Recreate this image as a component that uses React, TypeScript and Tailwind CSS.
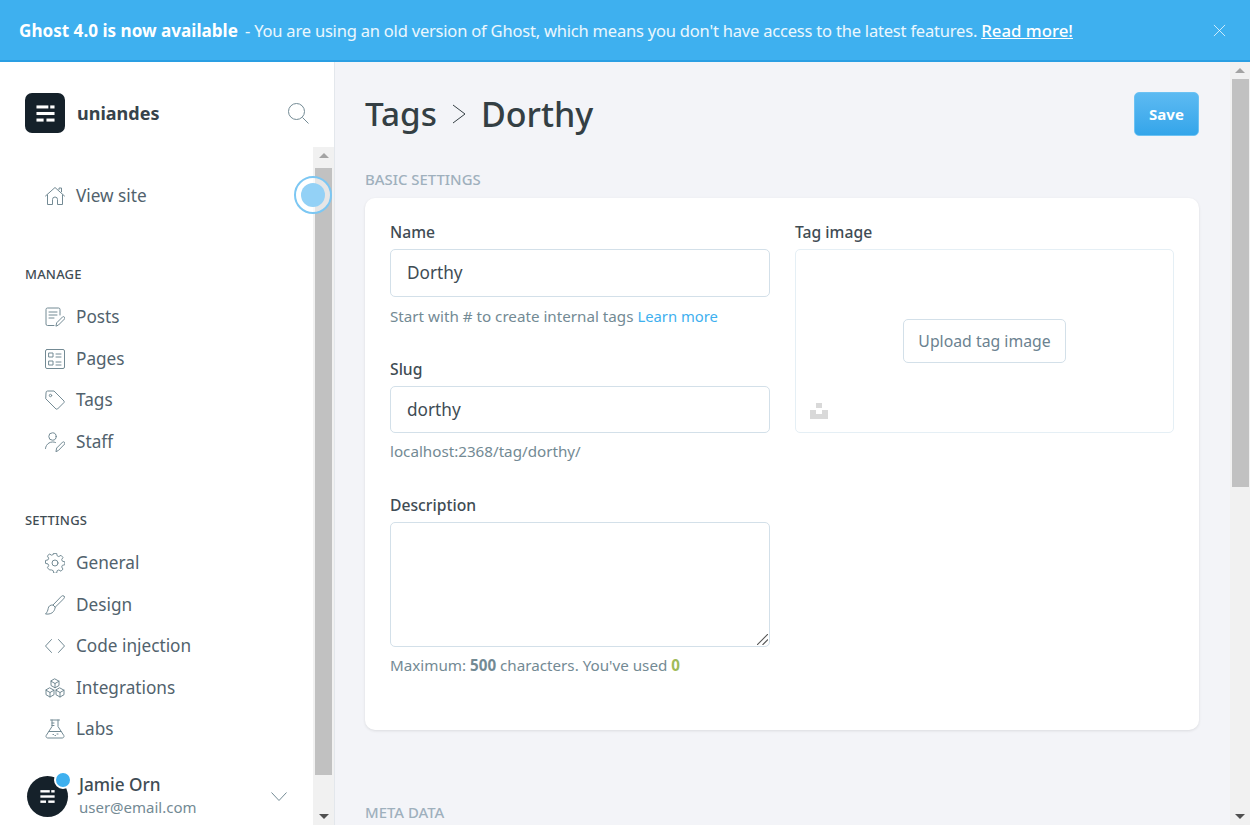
import type { ReactNode } from "react";

const Mark = ({ className }: { className: string }) => (
  <svg viewBox="0 0 20 20" className={className} fill="currentColor">
    <rect x="0.500" y="1.500" width="12.500" height="3.200" />
    <rect x="15" y="1.500" width="4.500" height="3.200" />
    <rect x="0.500" y="8.400" width="19" height="3.200" />
    <rect x="0.500" y="15.300" width="7.500" height="3.200" />
    <rect x="11" y="15.300" width="8.500" height="3.200" />
  </svg>
);

const Icon = ({ children }: { children: ReactNode }) => (
  <svg
    viewBox="0 0 20 20"
    className="w-5 h-5 shrink-0 text-[#738a94]"
    fill="none"
    stroke="currentColor"
    strokeWidth="1"
    strokeLinecap="round"
    strokeLinejoin="round"
  >
    {children}
  </svg>
);

const icons: Record<string, ReactNode> = {
  home: (
    <>
      <path d="M0.500 10 10 1.500l9.500 8.500" />
      <path d="M2.500 9v9.500h5v-5a2.500 2.500 0 0 1 5 0v5h5V9" />
      <path d="M14 3.500V2h2.500v3.700" />
    </>
  ),
  posts: (
    <>
      <path d="M9 18.500H2.500a1.500 1.500 0 0 1-1.500-1.500V2.500A1.500 1.500 0 0 1 2.500 1h11A1.500 1.500 0 0 1 15 2.500V8" />
      <path d="M4 5h8M4 8h8M4 11h5" />
      <path d="m11 18.800.7-3 6-6a1.500 1.500 0 0 1 2 2l-6 6z" />
    </>
  ),
  pages: (
    <>
      <rect x="0.500" y="0.500" width="19" height="19" rx="1.500" />
      <rect x="4" y="4" width="4" height="4" />
      <rect x="4" y="12" width="4" height="4" />
      <path d="M11 5h5M11 8h5M11 13h5M11 16h5" />
    </>
  ),
  tags: (
    <>
      <path d="M1 2.500A1.500 1.500 0 0 1 2.500 1H9l10 10a1.500 1.500 0 0 1 0 1.500L12.500 19a1.500 1.500 0 0 1-1.500 0L1 9z" />
      <circle cx="5.500" cy="5.500" r="1.200" />
    </>
  ),
  staff: (
    <>
      <circle cx="7.500" cy="4.500" r="3.700" />
      <path d="M0.500 16.500a7 7 0 0 1 10-6" />
      <path d="m11 19.300.7-3.300 6-6a1.500 1.500 0 0 1 2 2l-6 6.200z" />
    </>
  ),
  general: (
    <>
      <circle cx="10" cy="10" r="3" />
      <path d="M8.500 1h3l.5 2.500 1.700.8 2.300-1.300 2 2.200-1.300 2.200.7 1.700 2.600.6v3l-2.600.6-.7 1.700 1.300 2.200-2 2.200-2.300-1.300-1.700.8-.5 2.500h-3l-.5-2.500-1.700-.8L4 18l-2-2.200 1.300-2.200-.7-1.700L0 11.300v-3l2.600-.6.700-1.700L2 3.800 4 1.600l2.300 1.300L8 2.100z" transform="translate(.5 -.6) scale(.97)" />
    </>
  ),
  design: (
    <>
      <path d="M19 1.200c-.8-.8-1.800-.6-2.500 0L8 10l2.200 2.200 8.600-8.500c.7-.7 1-1.700.2-2.500z" />
      <path d="M8 10c-3-.5-4.500 1.500-4.800 3.500-.3 2-1.200 4-2.700 5.500 3.500.5 6.500-.5 8-2.500 1.200-1.500 1.500-3 1.700-4.300" />
    </>
  ),
  code: <path d="M6.500 3.500 0.500 10l6 6.500M13.500 3.500l6 6.500-6 6.500" />,
  integrations: (
    <>
      <path d="m10 1 4 2.200v4.300l-4 2.300-4-2.300V3.200zM6 3.200l4 2.300 4-2.300M10 5.500v4.300" />
      <path d="m5 10 4 2.200v4.500L5 19l-4-2.300v-4.500zM1 12.200l4 2.300 4-2.300M5 14.500V19" />
      <path d="m15 10 4 2.200v4.500L15 19l-4-2.300v-4.500zM11 12.200l4 2.300 4-2.300M15 14.500V19" />
    </>
  ),
  labs: (
    <>
      <path d="M5.500 1h9M7 1v6.500L1.200 16.500A1.700 1.700 0 0 0 2.700 19h14.600a1.700 1.700 0 0 0 1.500-2.500L13 7.500V1" />
      <path d="M7 4h2M7 6.500h2M4 12.500h12" />
      <path d="M8 15.500h.5M12 15h1M10 16.500h.5" />
    </>
  ),
};

const NavItem = ({ icon, label }: { icon: string; label: string }) => (
  <div className="h-[41.5px] flex items-center gap-[11px] pl-[40px] text-[#51626d] text-[17.2px]">
    <Icon>{icons[icon]}</Icon>
    <span>{label}</span>
  </div>
);

const Scrollbar = ({ width, thumbTop, thumbHeight }: { width: string; thumbTop: string; thumbHeight: string }) => (
  <div className={`${width} shrink-0 bg-[#f1f1f1] flex flex-col items-center`}>
    <div className="h-[17px] flex items-center justify-center">
      <div className="w-0 h-0 border-x-[5px] border-x-transparent border-b-[5px] border-b-[#a3a3a3]" />
    </div>
    <div className={`w-[17px] bg-[#c1c1c1] ${thumbTop} ${thumbHeight}`} />
    <div className="flex-1" />
    <div className="h-[17px] flex items-center justify-center">
      <div className="w-0 h-0 border-x-[5px] border-x-transparent border-t-[5px] border-t-[#505050]" />
    </div>
  </div>
);

const Label = ({ children }: { children: ReactNode }) => (
  <div className="text-[15.700px] leading-[17px] font-medium text-[#3f4c54]">{children}</div>
);

const Input = ({ value }: { value: string }) => (
  <div className="mt-[8px] h-[47.500px] flex items-center px-[16px] pt-[1px] bg-white border border-[#d3e0e9] rounded-[5px] text-[17.2px] text-[#3e4c54]">
    {value}
  </div>
);

const Help = ({ className, children }: { className: string; children: ReactNode }) => (
  <div className={`${className} text-[15.2px] leading-[20px] text-[#738a94]`}>{children}</div>
);

export default function App() {
  return (
    <div className="h-[825px] w-[1250px] overflow-hidden flex flex-col font-['Noto_Sans','Open_Sans',sans-serif] bg-[#f3f4f8]">
      {/* Upgrade banner */}
      <div className="h-[62px] shrink-0 bg-[#3eb0ef] border-b-2 border-[#2a9fe3] flex items-center justify-between pl-[19px] pr-[24px] pt-[1px] text-white text-[16.500px]">
        <div className="whitespace-nowrap">
          <span className="font-bold text-[17.100px]">Ghost 4.0 is now available</span>
          <span className="ml-[3px] text-white/90 tracking-[-0.2px]"> - You are using an old version of Ghost, which means you don't have access to the latest features. </span>
          <span className="font-medium underline text-[16.800px]">Read more!</span>
        </div>
        <svg viewBox="0 0 14 14" className="w-[13px] h-[13px] text-white/80" fill="none" stroke="currentColor" strokeWidth="1">
          <path d="M1 1l12 12M13 1L1 13" />
        </svg>
      </div>

      <div className="flex-1 flex min-h-0">
        {/* Sidebar */}
        <aside className="w-[335px] shrink-0 bg-white border-r border-[#e3e7ec] flex flex-col">
          <div className="h-[85px] shrink-0 flex items-center justify-between pl-[25px] pr-[25px] pt-[19px] pb-[2px]">
            <div className="flex items-center gap-[12px]">
              <div className="w-10 h-10 rounded-[7px] bg-[#15212a] flex items-center justify-center text-white">
                <Mark className="w-[19px] h-[19px]" />
              </div>
              <span className="text-[18px] font-bold text-[#37434b]">uniandes</span>
            </div>
            <svg viewBox="0 0 21 21" className="w-[21px] h-[21px] text-[#738a94]" fill="none" stroke="currentColor" strokeWidth="1">
              <circle cx="8.500" cy="8.500" r="8" />
              <path d="M14.500 14.500l6 6" />
            </svg>
          </div>

          <div className="flex-1 flex min-h-0 relative">
            <div className="flex-1 pl-[5px]">
              <div className="pt-[28px]">
                <NavItem icon="home" label="View site" />
              </div>
              <div className="mt-[48px] pl-[20px] h-[20px] flex items-center text-[13px] font-medium text-[#3f4c54] tracking-[0.2px]">MANAGE</div>
              <div className="mt-[12px]">
                <NavItem icon="posts" label="Posts" />
                <NavItem icon="pages" label="Pages" />
                <NavItem icon="tags" label="Tags" />
                <NavItem icon="staff" label="Staff" />
              </div>
              <div className="mt-[48px] pl-[20px] h-[20px] flex items-center text-[13px] font-medium text-[#3f4c54] tracking-[0.2px]">SETTINGS</div>
              <div className="mt-[12px]">
                <NavItem icon="general" label="General" />
                <NavItem icon="design" label="Design" />
                <NavItem icon="code" label="Code injection" />
                <NavItem icon="integrations" label="Integrations" />
                <NavItem icon="labs" label="Labs" />
              </div>
              <div className="mt-[24px] pl-[22px] pr-[26px] flex items-center">
                <div className="relative w-[41px] h-[41px] rounded-full bg-[#15212a] flex items-center justify-center text-white">
                  <Mark className="w-[15px] h-[15px]" />
                  <div className="absolute top-[-5px] right-[-4px] w-[18px] h-[18px] rounded-full bg-[#3eb0ef] border-2 border-white" />
                </div>
                <div className="ml-[11px] flex-1">
                  <div className="text-[17.200px] leading-[22px] font-medium text-[#3f4c54]">Jamie Orn</div>
                  <div className="text-[15px] leading-[22px] text-[#738a94]">user@email.com</div>
                </div>
                <svg viewBox="0 0 16 9" className="w-4 h-[9px] text-[#738a94]" fill="none" stroke="currentColor" strokeWidth="1">
                  <path d="M0.500 0.500 8 8.500l7.500-8" />
                </svg>
              </div>
            </div>
            <Scrollbar width="w-[21px]" thumbTop="mt-[4px]" thumbHeight="h-[607px]" />
            {/* onboarding pulse */}
            <div className="absolute right-[2px] top-[29px] w-[38px] h-[38px] rounded-full border-2 border-[#7cc7f3] bg-white/60 flex items-center justify-center">
              <div className="w-[24px] h-[24px] rounded-full bg-[#93d1f6]" />
            </div>
          </div>
        </aside>

        {/* Main */}
        <main className="flex-1 flex min-w-0">
          <div className="flex-1 pl-[30px] pr-[31px] overflow-hidden">
            <div className="mt-[30px] h-[44px] flex items-center justify-between">
              <h1 className="flex items-center text-[33.300px] font-medium text-[#343f44]">
                <span>Tags</span>
                <svg viewBox="0 0 14 20" className="w-[14px] h-5 mx-[15px] text-[#343f44]" fill="none" stroke="currentColor" strokeWidth="1">
                  <path d="M1 1l12 9-12 9" />
                </svg>
                <span className="text-[34px]">Dorthy</span>
              </h1>
              <button className="w-[65px] h-[44px] rounded-[5px] border border-[#6cc2f3] bg-gradient-to-b from-[#5cbaf2] to-[#33a5ea] text-white text-[15px] font-bold">
                Save
              </button>
            </div>

            <div className="mt-[33px] text-[14.900px] leading-[20px] font-medium text-[#9fb0bd]">BASIC SETTINGS</div>
            <div className="mt-[9px] h-[532px] bg-white rounded-[10px] shadow-[0_1px_3px_rgba(0,0,0,0.1)] px-[25px] pt-[26px] grid grid-cols-[380px_379px] gap-x-[25px]">
              <div>
                <Label>Name</Label>
                <Input value="Dorthy" />
                <Help className="mt-[9px]">
                  Start with # to create internal tags <span className="text-[#3eb0ef] text-[14.800px]">Learn more</span>
                </Help>
                <div className="mt-[35px]">
                  <Label>Slug</Label>
                </div>
                <Input value="dorthy" />
                <Help className="mt-[8px]">localhost:2368/tag/dorthy/</Help>
                <div className="mt-[36px]">
                  <Label>Description</Label>
                </div>
                <div className="relative mt-[8px] h-[125px] bg-white border border-[#d3e0e9] rounded-[5px]">
                  <svg viewBox="0 0 10 10" className="absolute right-[1px] bottom-[1px] w-[11px] h-[11px] text-[#555]" fill="none" stroke="currentColor" strokeWidth="1">
                    <path d="M0 10L10 0M5 10l5-5" />
                  </svg>
                </div>
                <Help className="mt-[8px]">
                  Maximum: <b className="font-bold">500</b> characters. You've used <b className="font-bold text-[#9fbb58]">0</b>
                </Help>
              </div>
              <div>
                <Label>Tag image</Label>
                <div className="relative mt-[8px] h-[184px] border border-[#e5eff5] rounded-[5px] flex items-center justify-center">
                  <button className="w-[163px] h-[44px] pt-[1px] bg-white border border-[#d3e0e9] rounded-[5px] text-[15.800px] text-[#6b8290]">
                    Upload tag image
                  </button>
                  <svg viewBox="0 0 18 16" className="absolute left-[14px] bottom-[13px] w-[18px] h-[16px] text-[#d9d9d9]" fill="currentColor">
                    <path d="M6 0h6v5H6z" />
                    <path d="M0 7h6v4h6V7h6v9H0z" />
                  </svg>
                </div>
              </div>
            </div>

            <div className="mt-[72px] text-[14.900px] leading-[20px] font-medium text-[#9fb0bd]">META DATA</div>
          </div>
          <Scrollbar width="w-[20px]" thumbTop="mt-0" thumbHeight="h-[408px]" />
        </main>
      </div>
    </div>
  );
}
